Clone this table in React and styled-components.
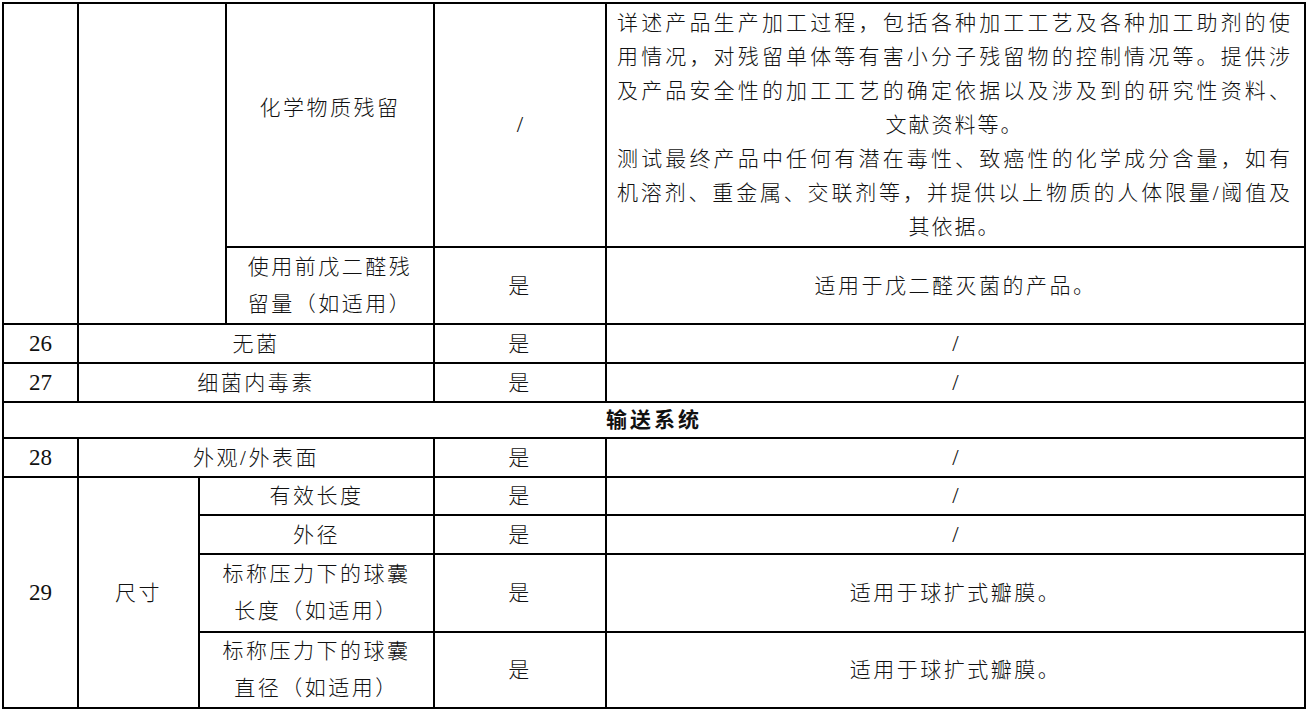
import React from 'react';
import styled, { createGlobalStyle } from 'styled-components';

const GlobalStyle = createGlobalStyle`
    html, body {
        margin: 0;
        padding: 0;
        background: #fff;
    }
    body {
        font-family: "Liberation Serif", "Noto Sans CJK SC", serif;
        color: #111;
    }
`;

const Sheet = styled.table`
    border-collapse: collapse;
    table-layout: fixed;
    width: 1302px;
    margin: 2px 0 0 2px;
`;

const Row = styled.tr`
    height: ${p => p.$h}px;
`;

const Cell = styled.td`
    border: 2px solid #000;
    padding: ${p => p.$pad || '0'};
    text-align: center;
    vertical-align: middle;
    font-size: 21px;
    font-weight: 300;
    letter-spacing: 2.5px;
    line-height: ${p => p.$lh || 28}px;
    white-space: nowrap;
    overflow: hidden;
`;

const Num = styled(Cell)`
    font-size: 23px;
    font-weight: 400;
    letter-spacing: 0;
`;

const Heading = styled(Cell)`
    font-weight: 700;
    letter-spacing: 3px;
`;

const Line = styled.span`
    display: block;
    text-align: ${p => (p.$full ? 'justify' : 'center')};
    text-align-last: ${p => (p.$full ? 'justify' : 'center')};
    letter-spacing: 2px;
`;

const cols = [75, 121, 27, 208, 172, 699];

const longLines = [
    ['详述产品生产加工过程，包括各种加工工艺及各种加工助剂的使', true],
    ['用情况，对残留单体等有害小分子残留物的控制情况等。提供涉', true],
    ['及产品安全性的加工工艺的确定依据以及涉及到的研究性资料、', true],
    ['文献资料等。', false],
    ['测试最终产品中任何有潜在毒性、致癌性的化学成分含量，如有', true],
    ['机溶剂、重金属、交联剂等，并提供以上物质的人体限量/阈值及', true],
    ['其依据。', false],
];

const simpleRows = [
    { no: '26', name: '无菌', need: '是', note: '/', h: 39 },
    { no: '27', name: '细菌内毒素', need: '是', note: '/', h: 39 },
];

const sizeRows = [
    { name: ['有效长度'], note: '/', h: 38 },
    { name: ['外径'], note: '/', h: 39 },
    { name: ['标称压力下的球囊', '长度（如适用）'], note: '适用于球扩式瓣膜。', h: 78 },
    { name: ['标称压力下的球囊', '直径（如适用）'], note: '适用于球扩式瓣膜。', h: 76 },
];

const Label = ({ lines }) =>
    lines.map((l, i) => (
        <React.Fragment key={i}>
            {i > 0 && <br />}
            {l}
        </React.Fragment>
    ));

const App = () => {
    return (
        <>
            <GlobalStyle />
            <Sheet>
                <colgroup>
                    {cols.map((w, i) => (
                        <col key={i} style={{ width: w }} />
                    ))}
                </colgroup>
                <tbody>
                    <Row $h={244}>
                        <Cell rowSpan={2} />
                        <Cell rowSpan={2} colSpan={2} />
                        <Cell $pad="0 0 34px 0">化学物质残留</Cell>
                        <Num>/</Num>
                        <Cell $lh={34} $pad="0 12px 0 10px">
                            {longLines.map(([t, full], i) => (
                                <Line key={i} $full={full}>{t}</Line>
                            ))}
                        </Cell>
                    </Row>
                    <Row $h={77}>
                        <Cell $lh={37}>
                            <Label lines={['使用前戊二醛残', '留量（如适用）']} />
                        </Cell>
                        <Cell>是</Cell>
                        <Cell>适用于戊二醛灭菌的产品。</Cell>
                    </Row>
                    {simpleRows.map(r => (
                        <Row key={r.no} $h={r.h}>
                            <Num>{r.no}</Num>
                            <Cell colSpan={3}>{r.name}</Cell>
                            <Cell>{r.need}</Cell>
                            <Num>{r.note}</Num>
                        </Row>
                    ))}
                    <Row $h={36}>
                        <Heading colSpan={6}>输送系统</Heading>
                    </Row>
                    <Row $h={39}>
                        <Num>28</Num>
                        <Cell colSpan={3}>外观/外表面</Cell>
                        <Cell>是</Cell>
                        <Num>/</Num>
                    </Row>
                    {sizeRows.map((r, i) => (
                        <Row key={i} $h={r.h}>
                            {i === 0 && <Num rowSpan={4}>29</Num>}
                            {i === 0 && <Cell rowSpan={4}>尺寸</Cell>}
                            <Cell colSpan={2} $lh={r.name.length > 1 ? 37 : 28}>
                                <Label lines={r.name} />
                            </Cell>
                            <Cell>是</Cell>
                            {r.note === '/' ? <Num>/</Num> : <Cell>{r.note}</Cell>}
                        </Row>
                    ))}
                </tbody>
            </Sheet>
        </>
    );
};

export default App;
